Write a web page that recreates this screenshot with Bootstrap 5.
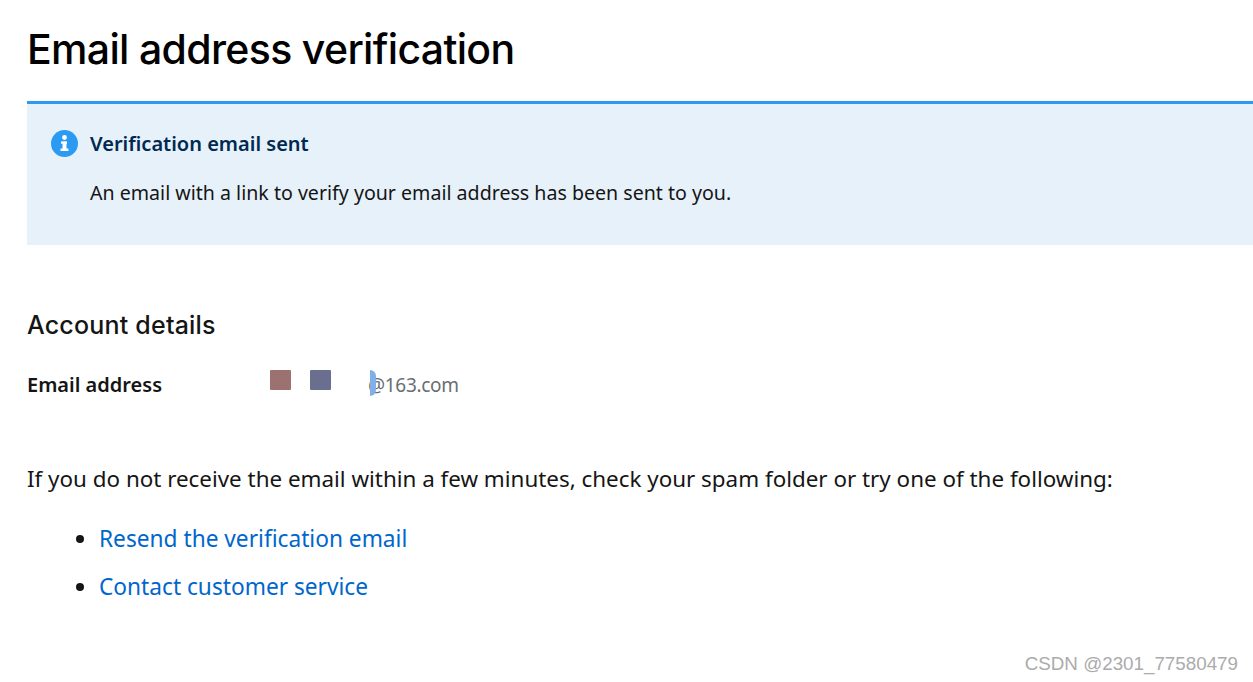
<!DOCTYPE html>
<html>
<head>
    <meta charset="utf-8" />
    <title>Email address verification</title>
    <link href="https://cdn.jsdelivr.net/npm/bootstrap@5.3.3/dist/css/bootstrap.min.css" rel="stylesheet">
    <style>
        html, body { height: 100%; }
        body { font-family: "Noto Sans", sans-serif; color: #151515; font-size: 22px; overflow: hidden; position: relative; }
        .page-wrap { padding: 22px 0 0 27px; }
        .page-title { font-family: Inter, sans-serif; font-size: 41px; font-weight: 500; line-height: 54px; letter-spacing: -0.67px; color: #000; margin: 0 0 25px; }
        .verify-alert { background: #e7f1fa; border-top: 3px solid #2b9af3; height: 144px; padding: 26px 24px 0; gap: 12px; }
        .verify-icon { width: 27px; height: 27px; flex: none; }
        .verify-head { font-size: 20px; font-weight: 600; color: #002952; line-height: 28px; margin-bottom: 20px; }
        .verify-text { font-size: 19.6px; line-height: 30px; }
        .section-title { font-family: Inter, sans-serif; font-size: 25px; font-weight: 500; line-height: 34px; letter-spacing: 0.2px; margin: 63px 0 27px; }
        .detail-row { height: 32px; }
        .detail-label { width: 242px; flex: none; font-size: 20px; font-weight: 600; }
        .detail-value { color: #6a6e73; font-size: 19px; letter-spacing: -0.3px; }
        .blur-a, .blur-b { width: 21px; height: 20px; display: block; margin-top: -10px; border-radius: 1px; filter: blur(0.5px); }
        .blur-a { background: #9c7270; margin-left: 1px; }
        .blur-b { background: #6b6f8f; margin-left: 19px; }
        .blur-c { width: 6px; height: 26px; background: #7fb0e8; border-radius: 0 6px 6px 0; display: block; margin: -4px -8px 0 39px; filter: blur(0.5px); }
        .help-text { font-size: 22.4px; line-height: 32px; margin: 62px 0 28px; }
        .help-links { font-size: 22.7px; padding-left: 72px; margin: 0; }
        .help-links li { line-height: 32px; margin-bottom: 16px; }
        .help-links a { color: #0066cc; text-decoration: none; }
        .csdn-mark { position: absolute; right: 15px; top: 652px; font-family: "Liberation Sans", sans-serif; font-size: 18.8px; line-height: 24px; color: #ababab; }
    </style>
</head>
<body>
    <div class="page-wrap">
        <h1 class="page-title">Email address verification</h1>
        <div class="verify-alert d-flex">
            <svg class="verify-icon" viewBox="0 0 27 27">
                <circle cx="13.5" cy="13.5" r="13.5" fill="#2b9af3"/>
                <circle cx="13.5" cy="7.5" r="2.4" fill="#fff"/>
                <rect x="10" y="11.5" width="6" height="2.2" fill="#fff"/>
                <rect x="11.5" y="11.5" width="4" height="8" fill="#fff"/>
                <rect x="9.5" y="18.5" width="8" height="2.5" rx=".5" fill="#fff"/>
            </svg>
            <div>
                <div class="verify-head">Verification email sent</div>
                <div class="verify-text">An email with a link to verify your email address has been sent to you.</div>
            </div>
        </div>
        <h2 class="section-title">Account details</h2>
        <div class="detail-row d-flex align-items-center">
            <div class="detail-label">Email address</div>
            <div class="d-flex align-items-center detail-value">
                <span class="blur-a"></span>
                <span class="blur-b"></span>
                <span class="blur-c"></span>
                <span>@163.com</span>
            </div>
        </div>
        <p class="help-text">If you do not receive the email within a few minutes, check your spam folder or try one of the following:</p>
        <ul class="help-links">
            <li><a href="#">Resend the verification email</a></li>
            <li><a href="#">Contact customer service</a></li>
        </ul>
    </div>
    <div class="csdn-mark">CSDN @2301_77580479</div>
    <script src="https://cdn.jsdelivr.net/npm/bootstrap@5.3.3/dist/js/bootstrap.bundle.min.js"></script>
</body>
</html>
